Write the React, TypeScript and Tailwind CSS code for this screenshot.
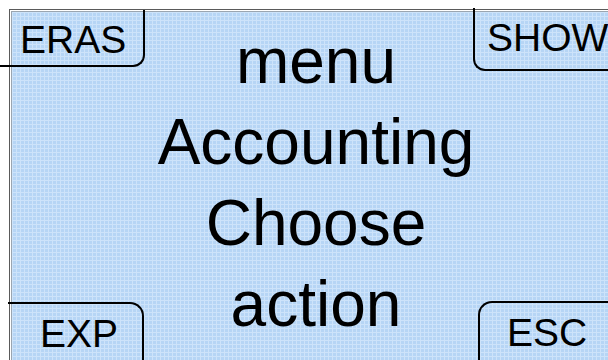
const lines = ["menu", "Accounting", "Choose", "action"];

export default function App() {
  return (
    <div className="relative h-[360px] w-[608px] overflow-hidden bg-white font-['Liberation_Sans',Arial,sans-serif] text-black">
      {/* screen frame */}
      <div className="ml-[9px] mt-[9px] h-[360px] w-[620px] border-l border-t border-[#5a5a5a] bg-white pl-[1px] pt-[1px]">
        <div className="h-full w-full border-l border-t border-[#9aa5b0] bg-[#b6d5f5] bg-[linear-gradient(to_right,#cde3fa_1px,transparent_1px),linear-gradient(to_bottom,#cde3fa_1px,transparent_1px)] bg-[size:4px_4px] pt-[9px]">
          <div className="flex w-[608px] flex-col items-center">
            {lines.map((line) => (
              <div key={line} className="text-[64px] leading-[81px]">
                {line}
              </div>
            ))}
          </div>
        </div>
      </div>

      {/* soft keys over the screen corners */}
      <div className="absolute left-0 top-[10px] h-[57px] w-[145px] rounded-br-[12px] border-b-2 border-r-2 border-black pl-[20px] pt-[10px] text-[39px] leading-[39px]">
        ERAS
      </div>
      <div className="absolute left-[473px] top-[8px] h-[63px] w-[150px] rounded-bl-[12px] border-b-2 border-l-2 border-black pl-[12px] pt-[10px] text-[39px] leading-[39px]">
        SHOW
      </div>
      <div className="absolute left-[8px] top-[302px] h-[70px] w-[136px] rounded-tr-[14px] border-r-2 border-t-2 border-black pl-[32px] pt-[10px] text-[39px] leading-[39px]">
        EXP
      </div>
      <div className="absolute left-[478px] top-[301px] h-[70px] w-[140px] rounded-tl-[14px] border-l-2 border-t-2 border-black pl-[27px] pt-[10px] text-[39px] leading-[39px]">
        ESC
      </div>
    </div>
  );
}
